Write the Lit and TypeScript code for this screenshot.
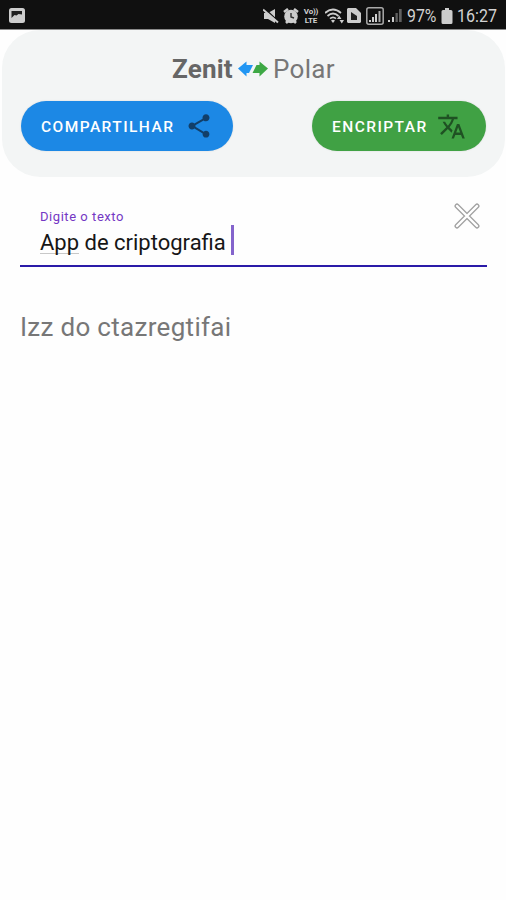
import { LitElement, html, css } from "lit";
import { customElement, property } from "lit/decorators.js";

@customElement("status-bar")
class StatusBar extends LitElement {
  static styles = css`
    :host { display: flex; align-items: center; height: 30px; padding: 2px 9px 0 9px; box-sizing: border-box;
      background: #101010; color: #d2d2d2; border-bottom: 1px solid #8a8a8a; fill: #cdcdcd; }
    svg { display: block; flex: none; }
    .shot { margin-right: auto; }
    .icons { display: flex; align-items: center; }
    .mute { margin-right: 4px; }
    .alarm { margin-right: 4px; }
    .lte { display: flex; flex-direction: column; align-items: center; width: 16px; margin-right: 6px; font: 700 8px/9px Roboto, sans-serif; letter-spacing: -0.2px; white-space: nowrap; }
    .wifi { margin-right: 2px; }
    .sim { margin-right: 5px; }
    .signal { margin-right: 3px; }
    .weak { margin-right: 5px; }
    .pct, .clock { font: 400 18px/20px Roboto, sans-serif; white-space: nowrap; transform-origin: 0 50%; }
    .pct { width: 34px; transform: scaleX(0.88); }
    .clock { width: 40px; margin-left: 4px; transform: scaleX(0.89); }
  `;
  render() {
    return html`
      <svg class="shot" width="16" height="15" viewBox="0 0 16 15"><rect width="16" height="15" rx="2.5"/><path d="M2.500 3h10.500v3.500l-3.500-.5-2 1.500-2-.5-3 3z" fill="#202020"/></svg>
      <div class="icons">
        <svg class="mute" width="16" height="16" viewBox="0 0 16 16"><path d="M1 5h4l7-4v14l-7-4H1z"/><path d="M1 0l15 14" stroke="#101010" stroke-width="1.500"/><path d="M0 1.500l15 13" stroke="#cdcdcd" stroke-width="2"/></svg>
        <svg class="alarm" width="16" height="16" viewBox="0 0 16 16"><circle cx="8" cy="8.5" r="6.800"/><path d="M1 4l4-3M15 4l-4-3M3 15l2-2M13 15l-2-2" stroke="#cdcdcd" stroke-width="2.600"/><path d="M8 5v4l3 1" stroke="#303030" stroke-width="1.4" fill="none"/></svg>
        <div class="lte"><span>Vo))</span><span>LTE</span></div>
        <svg class="wifi" width="20" height="16" viewBox="0 0 20 16"><g fill="none" stroke="#cdcdcd" stroke-width="1.8"><path d="M0 5Q8-2 16 5M2.500 8Q8 3 13.500 8M5 10.700Q8 8 11 10.700"/></g><path d="M6 12.500Q8 11 10 12.500L8 15zM12 11l2.200-3.500L16.500 11zM14.500 12h4.500l-2.200 3.500z"/></svg>
        <svg class="sim" width="14" height="15" viewBox="0 0 14 15"><path d="M1 0h8l5 5v9l-1 1H1l-1-1V1z"/><path d="M4 4l6 4v4H4z" fill="#202020"/></svg>
        <svg class="signal" width="18" height="18" viewBox="0 0 18 18"><rect x=".8" y=".8" width="16.400" height="16.400" rx="2" fill="none" stroke="#aaa" stroke-width="1.500"/><path d="M3 13h2v2H3zM6 10h2v5H6zM9 7h2v8H9z"/><path d="M12.500 4h2v11h-2z" fill="#aaa"/></svg>
        <svg class="weak" width="15" height="14" viewBox="0 0 15 14"><path d="M1 11h2v2H1zM5 8h2v5H5z"/><path d="M8.500 4h2.300v9H8.500zM12 0h2.700v13H12z" fill="#606060"/></svg>
        <span class="pct">97%</span>
        <svg width="12" height="16" viewBox="0 0 12 16"><path d="M4 0h4v2h2q1.500 0 1.500 1.500v11Q11.500 16 10 16H2Q.5 16 .5 14.500v-11Q.5 2 2 2h2z"/></svg>
        <span class="clock">16:27</span>
      </div>`;
  }
}

@customElement("pill-button")
class PillButton extends LitElement {
  @property() label = "";
  static styles = css`
    :host { display: flex; align-items: center; justify-content: space-between; box-sizing: border-box; height: 50px;
      padding: 0 20px; border-radius: 25px; color: #fff; font: 500 15.5px/20px Roboto, sans-serif;
      letter-spacing: 1.45px; white-space: nowrap; box-shadow: 0 0 2px rgba(0, 0, 0, 0.12); }
    span { padding-top: 2px; }
  `;
  render() {
    return html`<span>${this.label}</span><slot></slot>`;
  }
}

@customElement("app-root")
class AppRoot extends LitElement {
  static styles = css`
    :host { display: block; height: 900px; background: #fefefe; font-family: Roboto, sans-serif; overflow: hidden; }
    .header { margin: 0 1px 0 2px; height: 147px; box-sizing: border-box; padding: 22px 19px 0 19px;
      background: #f3f5f5; border-radius: 38px; }
    .title { display: flex; align-items: center; height: 34px; margin-left: 151px; font-size: 26px; color: #6b6b6b; white-space: nowrap; }
    .zenit { width: 66px; font-weight: 700; color: #666; letter-spacing: 0.2px; }
    .polar { margin-left: 5px; letter-spacing: 0.3px; color: #777; }
    .actions { display: flex; justify-content: space-between; margin-top: 15px; }
    .share { width: 212px; background: #1c88e5; }
    .encrypt { width: 174px; background: #40a144; }
    .field { display: flex; justify-content: space-between; margin: 24px 19px 0 20px; height: 66px; box-sizing: border-box;
      padding: 0 6px 0 20px; border-bottom: 2px solid #2a1aa8; }
    .label { margin-top: 8px; font-size: 13px; line-height: 15px; color: #7438c4; letter-spacing: 0.55px; }
    .value { display: flex; align-items: center; height: 30px; margin-top: 1px; font-size: 22px; color: #161616; white-space: nowrap; }
    .word { line-height: 23px; height: 23px; margin-top: 4px; border-bottom: 1px solid #c8c8c8; box-sizing: border-box; }
    .rest { line-height: 23px; margin-top: 4px; white-space: pre; }
    .caret { width: 3px; height: 30px; margin-left: 5px; background: #8464cc; }
    .clear { margin: 2px 1px 0 0; }
    .result { margin: 44px 20px 0; font-size: 26px; line-height: 32px; color: #777; letter-spacing: 0.3px; }
    svg { display: block; flex: none; }
  `;
  render() {
    return html`
      <status-bar></status-bar>
      <div class="header">
        <div class="title">
          <span class="zenit">Zenit</span>
          <svg width="30" height="18" viewBox="0 0 30 18"><path d="M0 8.500l8.500-7v3.500h6.500l-4 8H8.500v3.500z" fill="#2196f3"/><path d="M30 8.500l-8.500-7v3.500h-3l-4 8h7v3.500z" fill="#3da844"/></svg>
          <span class="polar">Polar</span>
        </div>
        <div class="actions">
          <pill-button class="share" label="COMPARTILHAR">
            <svg width="28" height="28" viewBox="0 0 24 24"><path fill="#123f69" d="M18 16.080c-.76 0-1.440.3-1.960.77L8.910 12.700c.05-.23.09-.46.09-.7s-.04-.47-.09-.7l7.050-4.110c.54.5 1.250.81 2.040.81 1.660 0 3-1.340 3-3s-1.340-3-3-3-3 1.340-3 3c0 .24.04.47.09.7L8.040 9.810C7.500 9.310 6.790 9 6 9c-1.660 0-3 1.340-3 3s1.340 3 3 3c.79 0 1.500-.31 2.040-.81l7.120 4.160c-.05.21-.08.43-.08.65 0 1.610 1.310 2.920 2.920 2.920s2.920-1.310 2.920-2.920-1.310-2.920-2.920-2.920z"/></svg>
          </pill-button>
          <pill-button class="encrypt" label="ENCRIPTAR">
            <svg width="29" height="29" viewBox="0 0 24 24"><path fill="#1f5123" d="M12.870 15.070l-2.540-2.510.03-.03c1.740-1.940 2.980-4.170 3.710-6.530H17V4h-7V2H8v2H1v1.990h11.170C11.500 7.920 10.440 9.750 9 11.350 8.070 10.320 7.300 9.190 6.690 8h-2c.73 1.630 1.730 3.170 2.980 4.560l-5.090 5.020L4 19l5-5 3.110 3.110.76-2.040zM18.500 10h-2L12 22h2l1.120-3h4.750L21 22h2l-4.500-12zm-2.620 7l1.620-4.330L19.120 17h-3.240z"/></svg>
          </pill-button>
        </div>
      </div>
      <div class="field">
        <div>
          <div class="label">Digite o texto</div>
          <div class="value"><span class="word">App</span><span class="rest"> de criptografia</span><span class="caret"></span></div>
        </div>
        <svg class="clear" width="26" height="26" viewBox="0 0 26 26"><g fill="none" stroke-linecap="round"><path d="M3 3l20 20M23 3L3 23" stroke="#a2a2a2" stroke-width="5"/><path d="M3 3l20 20M23 3L3 23" stroke="#fff" stroke-width="2.400"/></g></svg>
      </div>
      <div class="result">Izz do ctazregtifai</div>`;
  }
}
